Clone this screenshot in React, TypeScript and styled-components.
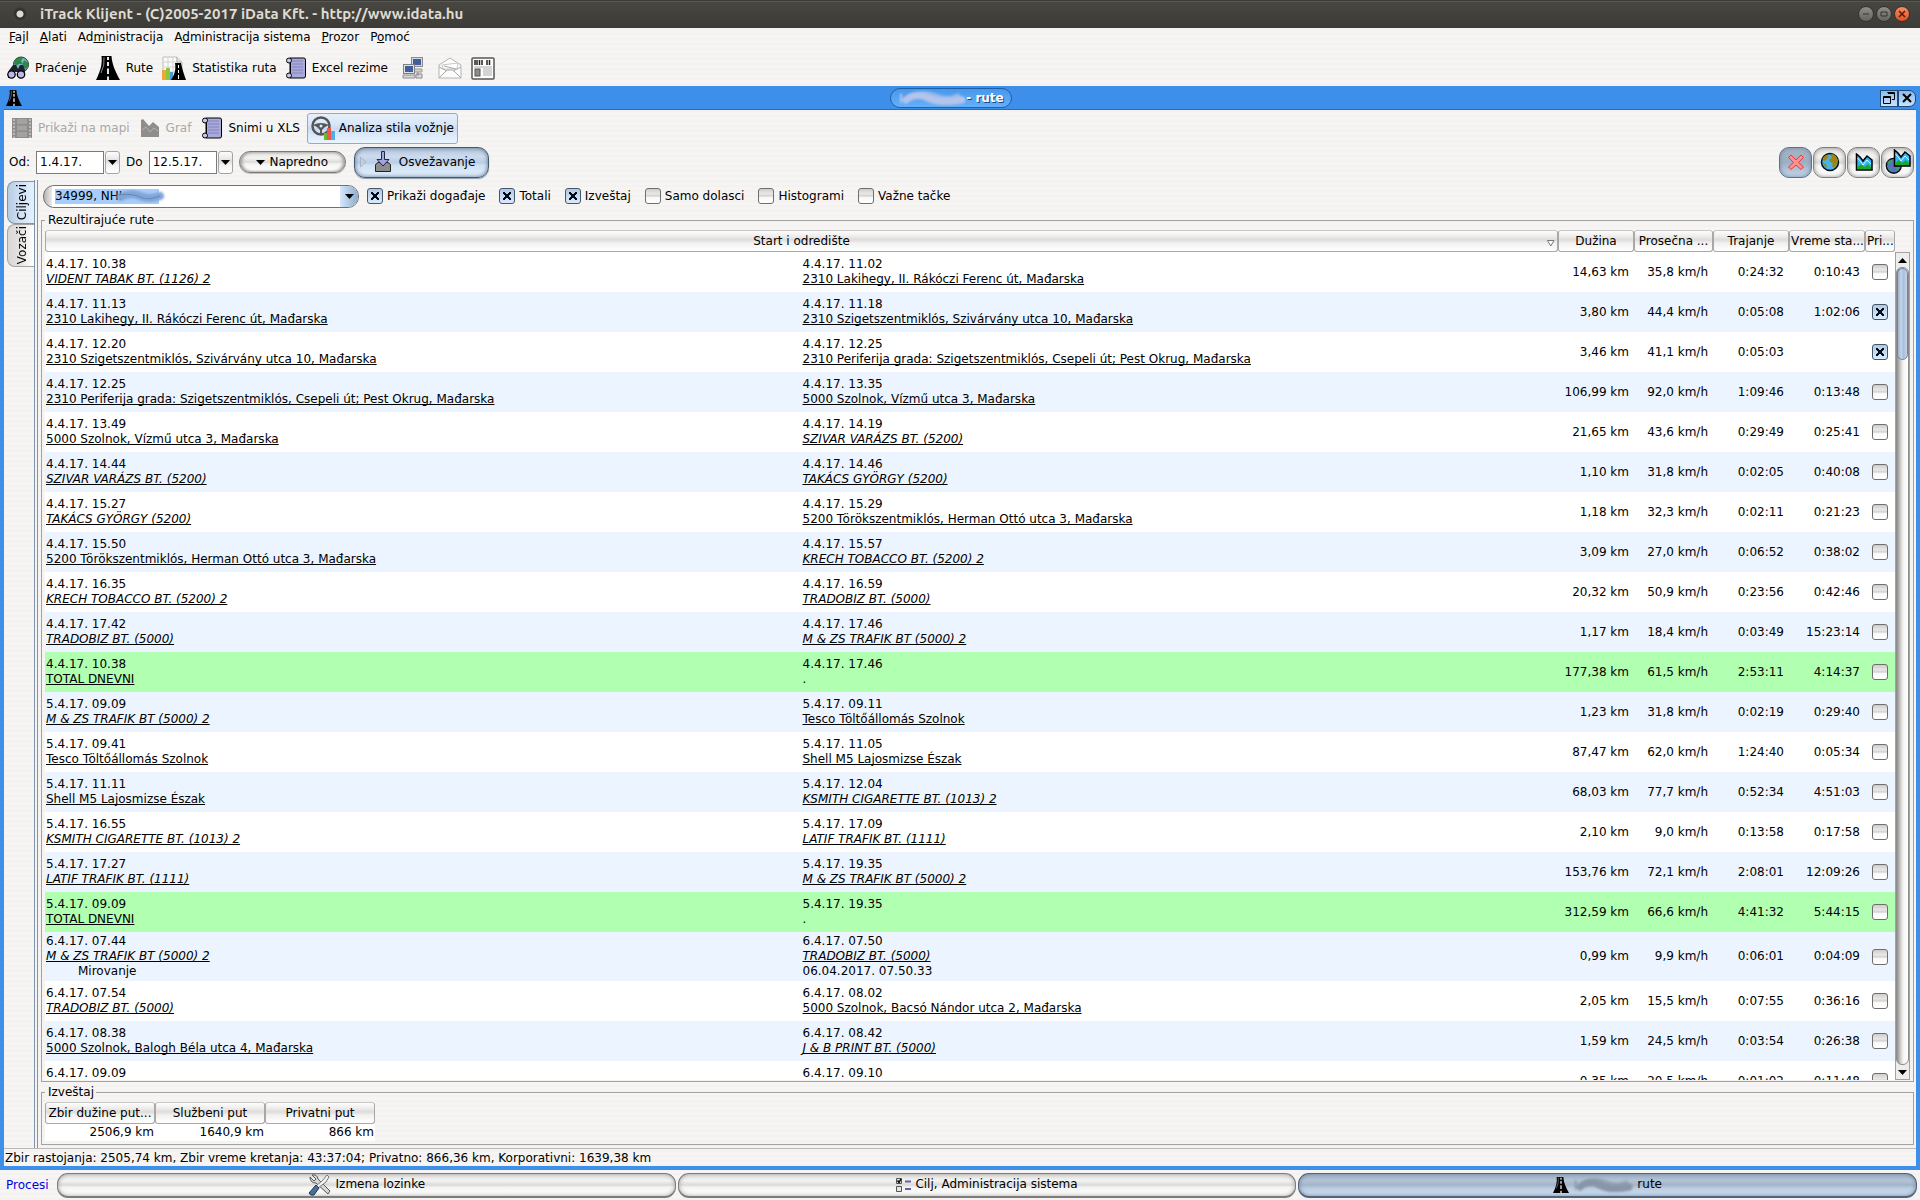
import React, { useState, ReactNode } from "react";
import styled, { createGlobalStyle, css } from "styled-components";

const Global = createGlobalStyle`
  * { box-sizing: border-box; }
  html, body, #root { height: 100%; }
  body { margin: 0; overflow: hidden; }
  button, input, table { font: inherit; color: inherit; }
`;

const stripes = "repeating-linear-gradient(#f6f5f3 0 3px, #f3f2f0 3px 5px)";
const greyShine = "linear-gradient(#fdfdfd, #efeeed 25%, #dddcdb 45%, #f2f1f0 60%, #ffffff)";
const glossy = "linear-gradient(#e2e1e0, #f3f3f2 30%, #dbdad9 50%, #f4f4f3 60%, #ffffff)";
const blueGlossy = "linear-gradient(#b3c5da, #cddbee 30%, #b9cde6 50%, #cfe0f2 60%, #e2f1ff)";

const Screen = styled.div`
  display: flex;
  flex-direction: column;
  height: 100vh;
  background: ${stripes};
  color: #000;
  font: 12px/15px "DejaVu Sans", Verdana, sans-serif;
`;

const SystemBar = styled.header`
  display: flex;
  align-items: center;
  flex: none;
  height: 28px;
  padding: 0 10px 0 12px;
  gap: 2px;
  background: linear-gradient(#3c3b37 0 1px, #5a5852 1px 2px, #474640 2px, #3c3b37);
`;

const SystemTitle = styled.h1`
  flex: 1;
  margin: 0 0 0 10px;
  color: #dfdbd2;
  font: 600 15px/20px Ubuntu, "Open Sans", "Noto Sans", sans-serif;
`;

const PinButton = styled.button`
  width: 16px;
  height: 16px;
  padding: 0;
  border: 0;
  border-radius: 50%;
  background: radial-gradient(circle, #dcdad5 0 3px, #2d2c29 4px, #47463f 8px);
`;

const RoundButton = styled.button<{ $close?: boolean }>`
  display: grid;
  place-items: center;
  width: 16px;
  height: 16px;
  padding: 0;
  border: 1px solid #34332f;
  border-radius: 50%;
  background: ${p => (p.$close ? "linear-gradient(#f58d66, #e2501f)" : "linear-gradient(#908e86, #65635c)")};
`;

const MenuBar = styled.nav`
  display: flex;
  align-items: flex-start;
  flex: none;
  gap: 11px;
  height: 22px;
  padding: 2px 9px 0;
`;

const MenuItem = styled.button`
  padding: 0;
  border: 0;
  background: none;
  line-height: 15px;
`;

const ToolBar = styled.div`
  display: flex;
  align-items: center;
  flex: none;
  gap: 3px;
  height: 36px;
  padding: 0 4px;
`;

const ToolButton = styled.button<{ $active?: boolean; $wide?: boolean }>`
  display: flex;
  align-items: center;
  gap: 6px;
  height: 31px;
  padding: 0 ${p => (p.$wide ? "8px" : "3px")};
  border: 1px solid transparent;
  border-radius: 3px;
  background: none;
  white-space: nowrap;
  &:disabled { color: #a9a8a7; }
  ${p => p.$active && css`
    gap: 4px;
    border-color: #93a9c4;
    background: linear-gradient(#e6f0fb, #d8e6f7 35%, #c9dbf2 50%, #dbe8f8 70%, #e8f4ff);
  `}
`;

const MainTools = styled(ToolBar)`
  gap: 1px;
  padding: 0 3px;
`;

const Frame = styled.section`
  display: flex;
  flex-direction: column;
  flex: 1;
  min-height: 0;
  border: solid #3d8fe9;
  border-width: 1px 4px 4px;
  background: ${stripes};
`;

const FrameTitle = styled.header`
  display: flex;
  align-items: center;
  flex: none;
  height: 23px;
  padding: 0 0 0 2px;
  border-bottom: 1px solid #2a6cba;
  background: #3d8fe9;
`;

const TitlePillArea = styled.div`
  flex: 1;
  display: flex;
  justify-content: center;
`;

const TitlePill = styled.h2`
  display: flex;
  align-items: center;
  height: 20px;
  margin: 0;
  padding: 0 7px;
  border: 1px solid #1c5fae;
  border-radius: 10px;
  background: linear-gradient(#4a97ea, #63b0fb);
  color: #fff;
  font-size: 12px;
  font-weight: 700;
  text-shadow: 1px 1px 0 #1c3f8a;
`;

const FrameButton = styled.button<{ $last?: boolean }>`
  display: grid;
  place-items: center;
  width: 18px;
  height: 17px;
  padding: 0;
  border: 1px solid #1d4a7e;
  border-radius: ${p => (p.$last ? "0 7px 7px 0" : "0")};
  background: linear-gradient(#8fbbe6, #c6e3ff);
`;

const FilterRow = styled.div`
  display: flex;
  align-items: center;
  flex: none;
  height: 34px;
  padding: 0 2px 2px 5px;
`;

const FieldLabel = styled.label`
  margin-right: 6px;
`;

const DateInput = styled.input`
  width: 68px;
  height: 23px;
  padding: 0 3px;
  border: 1px solid #7c7b7a;
  background: #fff;
`;

const DropButton = styled.button`
  display: grid;
  place-items: center;
  width: 15px;
  height: 23px;
  margin: 0 6px 0 1px;
  padding: 0;
  border: 1px solid #a5a4a3;
  border-radius: 3px;
  background: ${greyShine};
`;

const PillButton = styled.button`
  display: flex;
  align-items: center;
  justify-content: center;
  gap: 4px;
  width: 107px;
  height: 22px;
  padding: 0;
  border: 1px solid #7b7a78;
  border-radius: 11px;
  background: ${glossy};
  box-shadow: inset 2px 0 3px #a09f9d, inset -2px 0 3px #a09f9d, 0 1px 0 #c4c3c1;
`;

const RefreshButton = styled.button`
  display: flex;
  align-items: center;
  gap: 8px;
  width: 135px;
  height: 31px;
  margin-left: 8px;
  padding: 0 5px;
  border: 1px solid #44586f;
  border-radius: 11px;
  background: ${blueGlossy};
  box-shadow: inset 0 0 4px #56708c, 0 1px 1px #8f9cab;
`;

const Spacer = styled.div`
  flex: 1;
`;

const ViewButton = styled.button<{ $active?: boolean }>`
  display: grid;
  place-items: center;
  width: 33px;
  height: 31px;
  margin-left: 1px;
  padding: 0;
  border: 1px solid ${p => (p.$active ? "#5c728c" : "#807f7d")};
  border-radius: 10px;
  background: ${p => (p.$active ? "linear-gradient(#a5b4c6, #9fafc3 50%, #c6d8ec)" : glossy)};
  box-shadow: inset 0 0 4px ${p => (p.$active ? "#75889e" : "#8d8c8a")};
`;

const Workspace = styled.div`
  display: flex;
  flex: 1;
  min-height: 0;
`;

const TabStrip = styled.div`
  display: flex;
  flex-direction: column;
  flex: none;
  width: 30px;
  padding: 1px 0 0 3px;
`;

const SideTab = styled.button<{ $active?: boolean }>`
  display: grid;
  place-items: center;
  height: 43px;
  padding: 0 0 0 2px;
  border: 1px solid ${p => (p.$active ? "#7e93ac" : "#a5a4a2")};
  border-right: 0;
  border-radius: 8px 0 0 8px;
  background: ${p => (p.$active ? "linear-gradient(90deg, #b7cbe2, #cfe0f4 45%, #e4f1ff)" : "linear-gradient(90deg, #d9d8d6, #e4e3e2 45%, #fff)")};
  & > span {
    writing-mode: vertical-rl;
    transform: rotate(180deg);
  }
`;

const Pane = styled.div`
  display: flex;
  flex-direction: column;
  flex: 1;
  min-width: 0;
  border-left: 4px double #7e93ac;
  padding: 0 2px 3px 3px;
`;

const OptionRow = styled.div`
  display: flex;
  align-items: center;
  flex: none;
  gap: 14px;
  height: 32px;
  padding: 0 2px;
`;

const Combo = styled.div`
  position: relative;
  display: flex;
  width: 316px;
  height: 23px;
  margin-right: -6px;
  padding-left: 8px;
  border: 1px solid #72716f;
  border-radius: 11px;
  overflow: hidden;
  background: linear-gradient(90deg, #b5b4b2, #f4f3f2 9px, #fff 10px);
`;

const ComboArea = styled.div`
  flex: 1;
  display: flex;
  align-items: center;
  padding-left: 3px;
  background: #fff;
`;

const ComboInput = styled.input`
  width: 104px;
  height: 15px;
  padding: 0;
  border: 0;
  background: #a7cdfb;
`;

const ComboButton = styled.button`
  display: grid;
  place-items: center;
  width: 18px;
  padding: 0;
  border: 0;
  background: linear-gradient(90deg, #d6e7fa, #8badd2);
`;

const ComboSmudge = styled.svg`
  position: absolute;
  left: 68px;
  top: 1px;
`;

const CheckLabel = styled.label`
  display: flex;
  align-items: center;
  gap: 4px;
`;

const Check = styled.input`
  appearance: none;
  display: block;
  flex: none;
  width: 16px;
  height: 16px;
  margin: 0;
  border: 1px solid #6f6e6c;
  border-radius: 3px;
  background: linear-gradient(#cfcecd, #e9e8e7 35%, #d3d2d0 50%, #f8f8f8 60%, #fff);
  &:checked {
    border-color: #43566c;
    background:
      linear-gradient(45deg, transparent 41%, #000b1c 41% 59%, transparent 59%) center / 8px 8px no-repeat,
      linear-gradient(-45deg, transparent 41%, #000b1c 41% 59%, transparent 59%) center / 8px 8px no-repeat,
      linear-gradient(#b3c8e0, #d9eafd);
  }
`;

const Group = styled.fieldset<{ $grow?: boolean }>`
  display: flex;
  flex: ${p => (p.$grow ? "1" : "none")};
  min-width: 0;
  min-height: 0;
  margin: ${p => (p.$grow ? "0" : "2px 0 0")};
  padding: 2px 3px ${p => (p.$grow ? "1px" : "3px")};
  border: 1px solid #a3a2a0;
`;

const Legend = styled.legend`
  padding: 1px 2px 0 3px;
`;

const TableView = styled.div`
  flex: 1;
  min-width: 0;
  overflow: hidden;
`;

const RoutesTable = styled.table`
  width: 100%;
  table-layout: fixed;
  border-collapse: separate;
  border-spacing: 0;
  background: #fff;
`;

const Column = styled.col<{ $width?: number }>`
  width: ${p => (p.$width ? `${p.$width}px` : "auto")};
`;

const HeadCell = styled.th`
  position: relative;
  height: 22px;
  padding: 0 1px;
  border: 1px solid #a9a8a6;
  border-top-color: #c8c7c5;
  border-radius: 3px;
  background: ${greyShine};
  font-weight: 400;
  white-space: nowrap;
  overflow: hidden;
`;

const SortMark = styled.svg`
  position: absolute;
  right: 2px;
  bottom: 4px;
`;

type Tone = "plain" | "tinted" | "total";
const toneColour: Record<Tone, string> = { plain: "#ffffff", tinted: "#ecf5ff", total: "#b1ffb1" };

const Row = styled.tr<{ $tone: Tone }>`
  background: ${p => toneColour[p.$tone]};
`;

const PlaceCell = styled.td<{ $tight?: boolean }>`
  height: 40px;
  padding: ${p => (p.$tight ? "2px 1px" : "5px 1px")};
  vertical-align: top;
  white-space: nowrap;
`;

const NumberCell = styled.td`
  padding: 0 5px 0 0;
  text-align: right;
  white-space: nowrap;
`;

const CheckCell = styled.td`
  padding: 0 0 0 7px;
`;

const PlaceLink = styled.a<{ $italic?: boolean; $bare?: boolean }>`
  color: inherit;
  font-style: ${p => (p.$italic ? "italic" : "normal")};
  text-decoration: ${p => (p.$bare ? "none" : "underline")};
  text-decoration-thickness: 1px;
  text-decoration-skip-ink: none;
  text-underline-offset: 1px;
`;

const Note = styled.div<{ $indent?: boolean }>`
  padding-left: ${p => (p.$indent ? "32px" : "0")};
`;

const ScrollBar = styled.div`
  display: flex;
  flex-direction: column;
  flex: none;
  width: 15px;
  margin-top: 22px;
  border: 1px solid #a3a2a0;
  background: #eeedec;
`;

const ScrollButton = styled.button`
  display: grid;
  place-items: center;
  flex: none;
  height: 14px;
  padding: 0;
  border: 0;
  background: none;
`;

const ScrollTrack = styled.div`
  flex: 1;
  border: 1px solid #8d8c8a;
  border-radius: 6px;
  background: linear-gradient(90deg, #8f8e8c, #d4d3d2 35%, #f6f6f6 60%, #fff);
`;

const ScrollThumb = styled.div`
  height: 92px;
  border: 1px solid #6d839f;
  border-radius: 6px;
  background: linear-gradient(90deg, #9db2cd, #c3d5eb 35%, #a9bfdb 60%, #c3d5ea);
`;

const SummaryTable = styled.table`
  width: 330px;
  table-layout: fixed;
  border-collapse: separate;
  border-spacing: 0;
  background: #fff;
`;

const SummaryCell = styled.td`
  height: 17px;
  padding: 0 1px 0 0;
  text-align: right;
`;

const StatusLine = styled.footer`
  flex: none;
  height: 18px;
  padding: 2px 1px 0;
  border-top: 1px solid #b9b8b6;
`;

const TaskBar = styled.nav`
  display: flex;
  align-items: center;
  flex: none;
  gap: 2px;
  height: 30px;
  padding: 0 3px 0 6px;
`;

const TaskLabel = styled.span`
  width: 49px;
  color: #0000e6;
`;

const TaskButton = styled.button<{ $active?: boolean }>`
  display: flex;
  align-items: center;
  justify-content: center;
  flex: 1 1 0;
  gap: 4px;
  height: 25px;
  padding: 0;
  border: 1px solid ${p => (p.$active ? "#51647b" : "#7d7c7a")};
  border-bottom-width: 2px;
  border-radius: 11px;
  background: ${p => (p.$active ? "linear-gradient(#a5b5c7, #b3c3d6 30%, #a3b5ca 50%, #bccde1 65%, #cfe0f2)" : glossy)};
  box-shadow: inset 0 0 4px ${p => (p.$active ? "#6c7f96" : "#a09f9d")};
`;

/* ---------- icons ---------- */

const RoadIcon = ({ size = 24 }: { size?: number }) => (
  <svg width={size} height={size} viewBox="0 0 24 24">
    <path d="M5.500 0H15.500C16 8 19 15 24 24H0C4.500 15 6.500 8 5.500 0Z" fill="#000" />
    <path d="M12 1V4M12 6V10M12 12.500V18M12 20.500V24" stroke="#fff" strokeWidth="1.800" />
    <path d="M8 1Q9 9 5 17" stroke="#888" fill="none" />
  </svg>
);

const TrackIcon = () => (
  <svg width="22" height="24" viewBox="0 0 22 24">
    <circle cx="14" cy="8.500" r="7.500" fill="#7fb2d9" stroke="#143c1e" />
    <path d="M8 4C11 1 14 1 16 2L14 5 16 8 12 8 9 10 7 8ZM17 4L21 7V11L18 13 15 10Z" fill="#2a8a46" />
    <path d="M3 13L6 9H9L11 13 13 9H16L18 14V20H12V16H8L6 22H1V16Z" fill="#22222c" />
    <circle cx="4.500" cy="18.500" r="3.700" fill="#b9b9ea" stroke="#000" strokeWidth="1.300" />
    <circle cx="14" cy="18.500" r="3.700" fill="#b9b9ea" stroke="#000" strokeWidth="1.300" />
  </svg>
);

const StatsIcon = () => (
  <svg width="24" height="24" viewBox="0 0 24 24">
    <path d="M1 1H15L20 6V22H1Z" fill="#fafafa" stroke="#bdbdbd" />
    <path d="M1 6H20M1 11H20M1 16H20M6 1V22M11 1V22M15 1V22" stroke="#d3d3d3" />
    <path d="M15 1V6H20" fill="#e4e4e4" stroke="#b0b0b0" />
    <path d="M0 14H4V24H0Z" fill="#f2a53c" />
    <path d="M4 12H8V24H4Z" fill="#8cc63f" />
    <path d="M8 16H11V24H8Z" fill="#4c9cd8" />
    <path d="M13 7H19C20 13 22 18 24 24H9C13 18 14 13 13 7Z" fill="#000" />
    <path d="M16.500 9V12M16.500 14V17M16.500 19V23" stroke="#fff" />
  </svg>
);

const ScrollIcon = () => (
  <svg width="20" height="22" viewBox="0 0 20 22">
    <path d="M4 1H18Q19.500 1 19.500 3V19Q19.500 21 18 21H4Z" fill="#a9a9dc" stroke="#000" />
    <path d="M6 4H17M6 7H17M6 10H17M6 13H17M6 16H17" stroke="#8484bd" />
    <circle cx="3" cy="3.500" r="2.500" fill="#c9c9f0" stroke="#000" />
    <path d="M4.500 6V16" stroke="#000" />
    <circle cx="3" cy="18.500" r="2.500" fill="#c9c9f0" stroke="#000" />
  </svg>
);

const ComputersIcon = () => (
  <svg width="22" height="24" viewBox="0 0 22 24">
    <rect x="9.500" y="1.500" width="11" height="9" fill="#d8d8d8" stroke="#8b8b8b" />
    <rect x="11" y="3" width="8" height="6" fill="#3e5f9e" />
    <path d="M8 13H20V16H8Z" fill="#d0d0d0" stroke="#9a9a9a" />
    <rect x="1.500" y="8.500" width="11" height="9" fill="#e2e2e2" stroke="#808080" />
    <rect x="3" y="10" width="8" height="6" fill="#3e5f9e" />
    <path d="M1 19H13V22H1Z" fill="#d8d8d8" stroke="#909090" />
    <path d="M16 16V20M14 18H20V22H14Z" stroke="#888" fill="#ddd" />
  </svg>
);

const LetterIcon = () => (
  <svg width="24" height="22" viewBox="0 0 24 22">
    <path d="M1 8L12 1 23 8V21H1Z" fill="#fcfcfc" stroke="#b5b5b5" />
    <path d="M4 8L20 6 19 12H5Z" fill="#fff" stroke="#c7c7c7" />
    <path d="M1 21L9 13H15L23 21M1 10L9 14M23 10L15 14M6 9L18 12" fill="none" stroke="#a9a9a9" />
  </svg>
);

const NewsIcon = () => (
  <svg width="24" height="23" viewBox="0 0 24 23">
    <rect x="1" y="1" width="22" height="21" rx="1" fill="#fdfdfd" stroke="#555" strokeWidth="1.500" />
    <path d="M4 3V8M6 3V8M8.500 3V8M11 3V8M16 3V8M18.500 3V8" stroke="#222" strokeWidth="1.500" />
    <rect x="4" y="12" width="5" height="7" fill="#8c8c8c" stroke="#555" />
    <path d="M3 10H21M12 12H21M12 14H21M12 16H21M12 18H21" stroke="#aaa" />
  </svg>
);

const FilmIcon = () => (
  <svg width="20" height="20" viewBox="0 0 20 20">
    <rect width="20" height="20" fill="#8d8c8b" />
    <path d="M5 1H15V6H5ZM5 7.500H15V12.500H5ZM5 14H15V19H5Z" fill="#a3a2a1" />
    <path d="M2 1V20M18 1V20" stroke="#bdbcbb" strokeWidth="2" strokeDasharray="2 1.500" />
  </svg>
);

const GraphIcon = () => (
  <svg width="19" height="18" viewBox="0 0 19 18">
    <path d="M0 1L2 0 8 7 12 3 18 8V18H0Z" fill="#8f8e8d" />
    <path d="M1 11L5 8 9 13 13 9 17 12" fill="none" stroke="#b3b2b1" />
  </svg>
);

const WheelIcon = () => (
  <svg width="24" height="24" viewBox="0 0 24 24">
    <circle cx="10" cy="10" r="8.500" fill="none" stroke="#55565a" strokeWidth="2.500" />
    <path d="M2 9Q10 5 18 9L14 11 11 14V19H9V14L6 11Z" fill="#55565a" />
    <circle cx="10" cy="10" r="1.500" fill="#dfe9f6" />
    <path d="M13 17H17V24H13Z" fill="#6fb92c" />
    <path d="M16 12H20V24H16Z" fill="#f2564a" />
    <path d="M20 15H24V24H20Z" fill="#4fb0ea" />
  </svg>
);

const DownloadIcon = () => (
  <svg width="16" height="22" viewBox="0 0 16 22">
    <path d="M.5 13.500L3 11.500H13L15.500 13.500V20.500H.5Z" fill="#8d8d8d" stroke="#222" />
    <path d="M6.500 .5H9.500V8.500H14L8 15 2 8.500H6.500Z" fill="#a3a3e0" stroke="#22224a" />
  </svg>
);

const CrossIcon = () => (
  <svg width="18" height="18" viewBox="0 0 18 18">
    <path d="M4 2L9 7 14 2 16.500 4.500 11.500 9.500 16.500 14 14 16.500 9 12 4 16.500 1.500 14 6.500 9.500 1.500 4.500Z" fill="#ff8f8f" stroke="#e33d3d" />
  </svg>
);

const GlobeShape = ({ violet }: { violet?: boolean }) => (
  <g>
    <circle cx="10" cy="10" r="8.500" fill={violet ? "#5a6fc0" : "#45b4e8"} stroke="#0c0c18" strokeWidth="1.500" />
    <path d="M2.500 6L6 3 9 4 7 7 4 9ZM3 11L6 12 7 16 5 15ZM10 3L13 2 16 4 18 8 17 12 14 16 12 14 13 11 10 10 9 7 12 6Z" fill={violet ? "#3f9a6c" : "#9c8716"} />
  </g>
);

const ChartShape = () => (
  <g>
    <path d="M1.500 1L5 4 8 8 12 3 17 7V17H1.500Z" fill="#35b4f4" stroke="#000" strokeWidth="1.500" />
    <path d="M2.500 14L6 11 9 14 13 11 16 14V16H2.500Z" fill="#18a82a" />
    <path d="M2.500 5L6 9 8 12 12 7 16 11" fill="none" stroke="#e2f6ff" />
  </g>
);

const GlobeIcon = () => (
  <svg width="20" height="20" viewBox="0 0 20 20"><GlobeShape /></svg>
);

const ChartIcon = () => (
  <svg width="18" height="18" viewBox="0 0 18 18"><ChartShape /></svg>
);

const GlobeChartIcon = () => (
  <svg width="26" height="26" viewBox="0 0 26 26">
    <g transform="translate(0 8) scale(.88)"><GlobeShape violet /></g>
    <g transform="translate(8 0)"><ChartShape /></g>
  </svg>
);

const ToolsIcon = () => (
  <svg width="24" height="22" viewBox="0 0 24 22">
    <path d="M2 3L6 7 8 5 4 1Q9 0 10 5L22 17 20 20 8 9Q2 9 2 3Z" fill="#d8d8d8" stroke="#555" />
    <path d="M19 1L21 3 18 8 10 14 8 12 15 6Z" fill="#f2f2f2" stroke="#777" />
    <path d="M8 11L11 14 6 21Q2 22 1 19Z" fill="#45709c" stroke="#21364c" />
  </svg>
);

const ListIcon = () => (
  <svg width="15" height="14" viewBox="0 0 15 14">
    <path d="M.5 .5H5.500V5.500H.5ZM.5 8.500H5.500V13.500H.5Z" fill="#e6e6e6" stroke="#555" />
    <path d="M1.500 2.500L3 4.500 5 1" fill="none" stroke="#000" strokeWidth="1.500" />
    <path d="M9 3.500H15M9 11H15" stroke="#6262a8" strokeWidth="2" />
  </svg>
);

const Arrow = ({ up }: { up?: boolean }) => (
  <svg width="9" height="5" viewBox="0 0 9 5">
    <path d={up ? "M0 5L4.500 0 9 5Z" : "M0 0H9L4.500 5Z"} fill="#000" />
  </svg>
);

const SmudgeSvg = styled.svg`
  overflow: visible;
  & > g { filter: blur(1px); }
`;

const Smudge = ({ colour, width }: { colour: string; width: number }) => (
  <SmudgeSvg width={width} height="18" viewBox="0 0 68 18" preserveAspectRatio="none">
    <g fill="none" stroke={colour} strokeLinecap="round">
      <path d="M3 13V5" strokeWidth="2" />
      <path d="M8 11Q18 3 30 9T64 11" strokeWidth="7" />
      <path d="M12 7Q26 2 38 7T60 7" strokeWidth="5" opacity=".7" />
    </g>
  </SmudgeSvg>
);

/* ---------- data ---------- */

interface Place { time: string; name: string; italic?: boolean; note?: string }
interface Route { from: Place; to: Place; km: string; speed: string; drive: string; stand: string; priv?: boolean; total?: boolean }

const at = (time: string, name: string, italic = false, note?: string): Place => ({ time, name, italic, note });

const routes: Route[] = [
  { from: at("4.4.17. 10.38", "VIDENT TABAK BT. (1126) 2", true), to: at("4.4.17. 11.02", "2310 Lakihegy, II. Rákóczi Ferenc út, Mađarska"), km: "14,63", speed: "35,8", drive: "0:24:32", stand: "0:10:43" },
  { from: at("4.4.17. 11.13", "2310 Lakihegy, II. Rákóczi Ferenc út, Mađarska"), to: at("4.4.17. 11.18", "2310 Szigetszentmiklós, Szivárvány utca 10, Mađarska"), km: "3,80", speed: "44,4", drive: "0:05:08", stand: "1:02:06", priv: true },
  { from: at("4.4.17. 12.20", "2310 Szigetszentmiklós, Szivárvány utca 10, Mađarska"), to: at("4.4.17. 12.25", "2310 Periferija grada: Szigetszentmiklós, Csepeli út; Pest Okrug, Mađarska"), km: "3,46", speed: "41,1", drive: "0:05:03", stand: "", priv: true },
  { from: at("4.4.17. 12.25", "2310 Periferija grada: Szigetszentmiklós, Csepeli út; Pest Okrug, Mađarska"), to: at("4.4.17. 13.35", "5000 Szolnok, Vízmű utca 3, Mađarska"), km: "106,99", speed: "92,0", drive: "1:09:46", stand: "0:13:48" },
  { from: at("4.4.17. 13.49", "5000 Szolnok, Vízmű utca 3, Mađarska"), to: at("4.4.17. 14.19", "SZIVAR VARÁZS BT. (5200)", true), km: "21,65", speed: "43,6", drive: "0:29:49", stand: "0:25:41" },
  { from: at("4.4.17. 14.44", "SZIVAR VARÁZS BT. (5200)", true), to: at("4.4.17. 14.46", "TAKÁCS GYÖRGY (5200)", true), km: "1,10", speed: "31,8", drive: "0:02:05", stand: "0:40:08" },
  { from: at("4.4.17. 15.27", "TAKÁCS GYÖRGY (5200)", true), to: at("4.4.17. 15.29", "5200 Törökszentmiklós, Herman Ottó utca 3, Mađarska"), km: "1,18", speed: "32,3", drive: "0:02:11", stand: "0:21:23" },
  { from: at("4.4.17. 15.50", "5200 Törökszentmiklós, Herman Ottó utca 3, Mađarska"), to: at("4.4.17. 15.57", "KRECH TOBACCO BT. (5200) 2", true), km: "3,09", speed: "27,0", drive: "0:06:52", stand: "0:38:02" },
  { from: at("4.4.17. 16.35", "KRECH TOBACCO BT. (5200) 2", true), to: at("4.4.17. 16.59", "TRADOBIZ BT. (5000)", true), km: "20,32", speed: "50,9", drive: "0:23:56", stand: "0:42:46" },
  { from: at("4.4.17. 17.42", "TRADOBIZ BT. (5000)", true), to: at("4.4.17. 17.46", "M & ZS TRAFIK BT (5000) 2", true), km: "1,17", speed: "18,4", drive: "0:03:49", stand: "15:23:14" },
  { from: at("4.4.17. 10.38", "TOTAL DNEVNI"), to: at("4.4.17. 17.46", "."), km: "177,38", speed: "61,5", drive: "2:53:11", stand: "4:14:37", total: true },
  { from: at("5.4.17. 09.09", "M & ZS TRAFIK BT (5000) 2", true), to: at("5.4.17. 09.11", "Tesco Töltőállomás Szolnok"), km: "1,23", speed: "31,8", drive: "0:02:19", stand: "0:29:40" },
  { from: at("5.4.17. 09.41", "Tesco Töltőállomás Szolnok"), to: at("5.4.17. 11.05", "Shell M5 Lajosmizse Észak"), km: "87,47", speed: "62,0", drive: "1:24:40", stand: "0:05:34" },
  { from: at("5.4.17. 11.11", "Shell M5 Lajosmizse Észak"), to: at("5.4.17. 12.04", "KSMITH CIGARETTE BT. (1013) 2", true), km: "68,03", speed: "77,7", drive: "0:52:34", stand: "4:51:03" },
  { from: at("5.4.17. 16.55", "KSMITH CIGARETTE BT. (1013) 2", true), to: at("5.4.17. 17.09", "LATIF TRAFIK BT. (1111)", true), km: "2,10", speed: "9,0", drive: "0:13:58", stand: "0:17:58" },
  { from: at("5.4.17. 17.27", "LATIF TRAFIK BT. (1111)", true), to: at("5.4.17. 19.35", "M & ZS TRAFIK BT (5000) 2", true), km: "153,76", speed: "72,1", drive: "2:08:01", stand: "12:09:26" },
  { from: at("5.4.17. 09.09", "TOTAL DNEVNI"), to: at("5.4.17. 19.35", "."), km: "312,59", speed: "66,6", drive: "4:41:32", stand: "5:44:15", total: true },
  { from: at("6.4.17. 07.44", "M & ZS TRAFIK BT (5000) 2", true, "Mirovanje"), to: at("6.4.17. 07.50", "TRADOBIZ BT. (5000)", true, "06.04.2017. 07.50.33"), km: "0,99", speed: "9,9", drive: "0:06:01", stand: "0:04:09" },
  { from: at("6.4.17. 07.54", "TRADOBIZ BT. (5000)", true), to: at("6.4.17. 08.02", "5000 Szolnok, Bacsó Nándor utca 2, Mađarska"), km: "2,05", speed: "15,5", drive: "0:07:55", stand: "0:36:16" },
  { from: at("6.4.17. 08.38", "5000 Szolnok, Balogh Béla utca 4, Mađarska"), to: at("6.4.17. 08.42", "J & B PRINT BT. (5000)", true), km: "1,59", speed: "24,5", drive: "0:03:54", stand: "0:26:38" },
  { from: at("6.4.17. 09.09", "J & B PRINT BT. (5000)", true), to: at("6.4.17. 09.10", "TRADOBIZ BT. (5000)", true), km: "0,35", speed: "20,5", drive: "0:01:02", stand: "0:11:48" },
];

const menus = [["", "F", "ajl"], ["", "A", "lati"], ["Ad", "m", "inistracija"], ["A", "d", "ministracija sistema"], ["", "P", "rozor"], ["P", "o", "moć"]];

const options: [string, boolean][] = [["Prikaži događaje", true], ["Totali", true], ["Izveštaj", true], ["Samo dolasci", false], ["Histogrami", false], ["Važne tačke", false]];

/* ---------- parts ---------- */

const PlaceView = ({ place, indent }: { place: Place; indent?: boolean }) => (
  <PlaceCell $tight={Boolean(place.note)}>
    <div>{place.time}</div>
    <div><PlaceLink href="#" $italic={place.italic} $bare={place.name === "."}>{place.name}</PlaceLink></div>
    {place.note && <Note $indent={indent}>{place.note}</Note>}
  </PlaceCell>
);

const RouteRow = ({ route, index }: { route: Route; index: number }) => (
  <Row $tone={route.total ? "total" : index % 2 ? "tinted" : "plain"}>
    <PlaceView place={route.from} indent />
    <PlaceView place={route.to} />
    <NumberCell>{route.km} km</NumberCell>
    <NumberCell>{route.speed} km/h</NumberCell>
    <NumberCell>{route.drive}</NumberCell>
    <NumberCell>{route.stand}</NumberCell>
    <CheckCell><Check type="checkbox" aria-label="Privatno" defaultChecked={route.priv} /></CheckCell>
  </Row>
);

const Option = ({ children, initial }: { children: ReactNode; initial: boolean }) => {
  const [on, setOn] = useState(initial);
  return (
    <CheckLabel>
      <Check type="checkbox" checked={on} onChange={e => setOn(e.target.checked)} />
      {children}
    </CheckLabel>
  );
};

export default function App() {
  return (
    <Screen>
      <Global />
      <SystemBar>
        <PinButton aria-label="Meni prozora" />
        <SystemTitle>iTrack Klijent - (C)2005-2017 iData Kft. - http://www.idata.hu</SystemTitle>
        <RoundButton aria-label="Umanji"><svg width="8" height="8"><path d="M1 4H7" stroke="#34332f" /></svg></RoundButton>
        <RoundButton aria-label="Uvećaj"><svg width="8" height="8"><path d="M1 2H7V6H1Z" fill="none" stroke="#34332f" /></svg></RoundButton>
        <RoundButton aria-label="Zatvori" $close><svg width="8" height="8"><path d="M1 1L7 7M7 1L1 7" stroke="#4a1e0c" strokeWidth="1.500" /></svg></RoundButton>
      </SystemBar>

      <MenuBar>
        {menus.map(([a, b, c]) => <MenuItem key={a + b + c}>{a}<u>{b}</u>{c}</MenuItem>)}
      </MenuBar>

      <MainTools>
        <ToolButton><TrackIcon />Praćenje</ToolButton>
        <ToolButton><RoadIcon />Rute</ToolButton>
        <ToolButton><StatsIcon />Statistika ruta</ToolButton>
        <ToolButton><ScrollIcon />Excel rezime</ToolButton>
        <ToolButton aria-label="Računari" $wide><ComputersIcon /></ToolButton>
        <ToolButton aria-label="Poruke"><LetterIcon /></ToolButton>
        <ToolButton aria-label="Vesti"><NewsIcon /></ToolButton>
      </MainTools>

      <Frame>
        <FrameTitle>
          <RoadIcon size={16} />
          <TitlePillArea>
            <TitlePill><Smudge colour="#b4c4ea" width={68} />- rute</TitlePill>
          </TitlePillArea>
          <FrameButton aria-label="Vrati"><svg width="12" height="12"><path d="M4.500 1V.5H11.500V7.500H9M5 1.500H11M.5 4.500H7.500V11.500H.5ZM1 5.500H7" fill="none" stroke="#000" /></svg></FrameButton>
          <FrameButton aria-label="Zatvori" $last><svg width="10" height="10"><path d="M1 1L9 9M9 1L1 9" stroke="#000" strokeWidth="2" /></svg></FrameButton>
        </FrameTitle>

        <ToolBar>
          <ToolButton disabled><FilmIcon />Prikaži na mapi</ToolButton>
          <ToolButton disabled><GraphIcon />Graf</ToolButton>
          <ToolButton><ScrollIcon />Snimi u XLS</ToolButton>
          <ToolButton $active><WheelIcon />Analiza stila vožnje</ToolButton>
        </ToolBar>

        <FilterRow>
          <FieldLabel htmlFor="from">Od:</FieldLabel>
          <DateInput id="from" defaultValue="1.4.17." />
          <DropButton aria-label="Izaberi početni datum"><Arrow /></DropButton>
          <FieldLabel htmlFor="to">Do</FieldLabel>
          <DateInput id="to" defaultValue="12.5.17." />
          <DropButton aria-label="Izaberi krajnji datum"><Arrow /></DropButton>
          <PillButton><Arrow />Napredno</PillButton>
          <RefreshButton>
            <svg width="7" height="12"><path d="M.5 1L6 6 .5 11Z" fill="none" stroke="#a9b4c2" /></svg>
            <DownloadIcon />
            Osvežavanje
          </RefreshButton>
          <Spacer />
          <ViewButton aria-label="Bez prikaza" $active><CrossIcon /></ViewButton>
          <ViewButton aria-label="Mapa"><GlobeIcon /></ViewButton>
          <ViewButton aria-label="Grafikon"><ChartIcon /></ViewButton>
          <ViewButton aria-label="Mapa i grafikon"><GlobeChartIcon /></ViewButton>
        </FilterRow>

        <Workspace>
          <TabStrip>
            <SideTab $active><span>Ciljevi</span></SideTab>
            <SideTab><span>Vozači</span></SideTab>
          </TabStrip>
          <Pane>
            <OptionRow>
              <Combo>
                <ComboArea><ComboInput aria-label="Vozilo" defaultValue="34999, NHI" /></ComboArea>
                <ComboButton aria-label="Izaberi vozilo"><Arrow /></ComboButton>
                <ComboSmudge width="56" height="18" viewBox="0 0 56 18">
                  <path d="M9 10Q18 5 28 9T48 9" fill="none" stroke="#7ea6d6" strokeWidth="8" strokeLinecap="round" filter="blur(1px)" />
                  <path d="M4 8Q20 6 28 10T48 9" fill="none" stroke="#56759c" strokeWidth="1" opacity=".6" />
                </ComboSmudge>
              </Combo>
              {options.map(([name, on]) => <Option key={name} initial={on}>{name}</Option>)}
            </OptionRow>

            <Group $grow>
              <Legend>Rezultirajuće rute</Legend>
              <TableView>
                <RoutesTable>
                  <colgroup>
                    <Column /><Column />
                    <Column $width={76} /><Column $width={79} /><Column $width={76} /><Column $width={76} /><Column $width={30} />
                  </colgroup>
                  <thead>
                    <tr>
                      <HeadCell colSpan={2}>
                        Start i odredište
                        <SortMark width="8" height="7"><path d="M.5 .5H7L3.750 6Z" fill="#fff" stroke="#777" /></SortMark>
                      </HeadCell>
                      <HeadCell>Dužina</HeadCell>
                      <HeadCell>Prosečna ...</HeadCell>
                      <HeadCell>Trajanje</HeadCell>
                      <HeadCell>Vreme sta...</HeadCell>
                      <HeadCell>Pri...</HeadCell>
                    </tr>
                  </thead>
                  <tbody>
                    {routes.map((r, i) => <RouteRow key={i} route={r} index={i} />)}
                  </tbody>
                </RoutesTable>
              </TableView>
              <ScrollBar>
                <ScrollButton aria-label="Gore"><Arrow up /></ScrollButton>
                <ScrollTrack><ScrollThumb /></ScrollTrack>
                <ScrollButton aria-label="Dole"><Arrow /></ScrollButton>
              </ScrollBar>
            </Group>

            <Group>
              <Legend>Izveštaj</Legend>
              <SummaryTable>
                <thead>
                  <tr>
                    <HeadCell>Zbir dužine put...</HeadCell>
                    <HeadCell>Službeni put</HeadCell>
                    <HeadCell>Privatni put</HeadCell>
                  </tr>
                </thead>
                <tbody>
                  <tr>
                    <SummaryCell>2506,9 km</SummaryCell>
                    <SummaryCell>1640,9 km</SummaryCell>
                    <SummaryCell>866 km</SummaryCell>
                  </tr>
                </tbody>
              </SummaryTable>
            </Group>
          </Pane>
        </Workspace>

        <StatusLine>Zbir rastojanja: 2505,74 km, Zbir vreme kretanja: 43:37:04; Privatno: 866,36 km, Korporativni: 1639,38 km</StatusLine>
      </Frame>

      <TaskBar>
        <TaskLabel>Procesi</TaskLabel>
        <TaskButton><ToolsIcon />Izmena lozinke</TaskButton>
        <TaskButton><ListIcon />Cilj, Administracija sistema</TaskButton>
        <TaskButton $active><RoadIcon size={16} /><Smudge colour="#8796a8" width={60} />rute</TaskButton>
      </TaskBar>
    </Screen>
  );
}
